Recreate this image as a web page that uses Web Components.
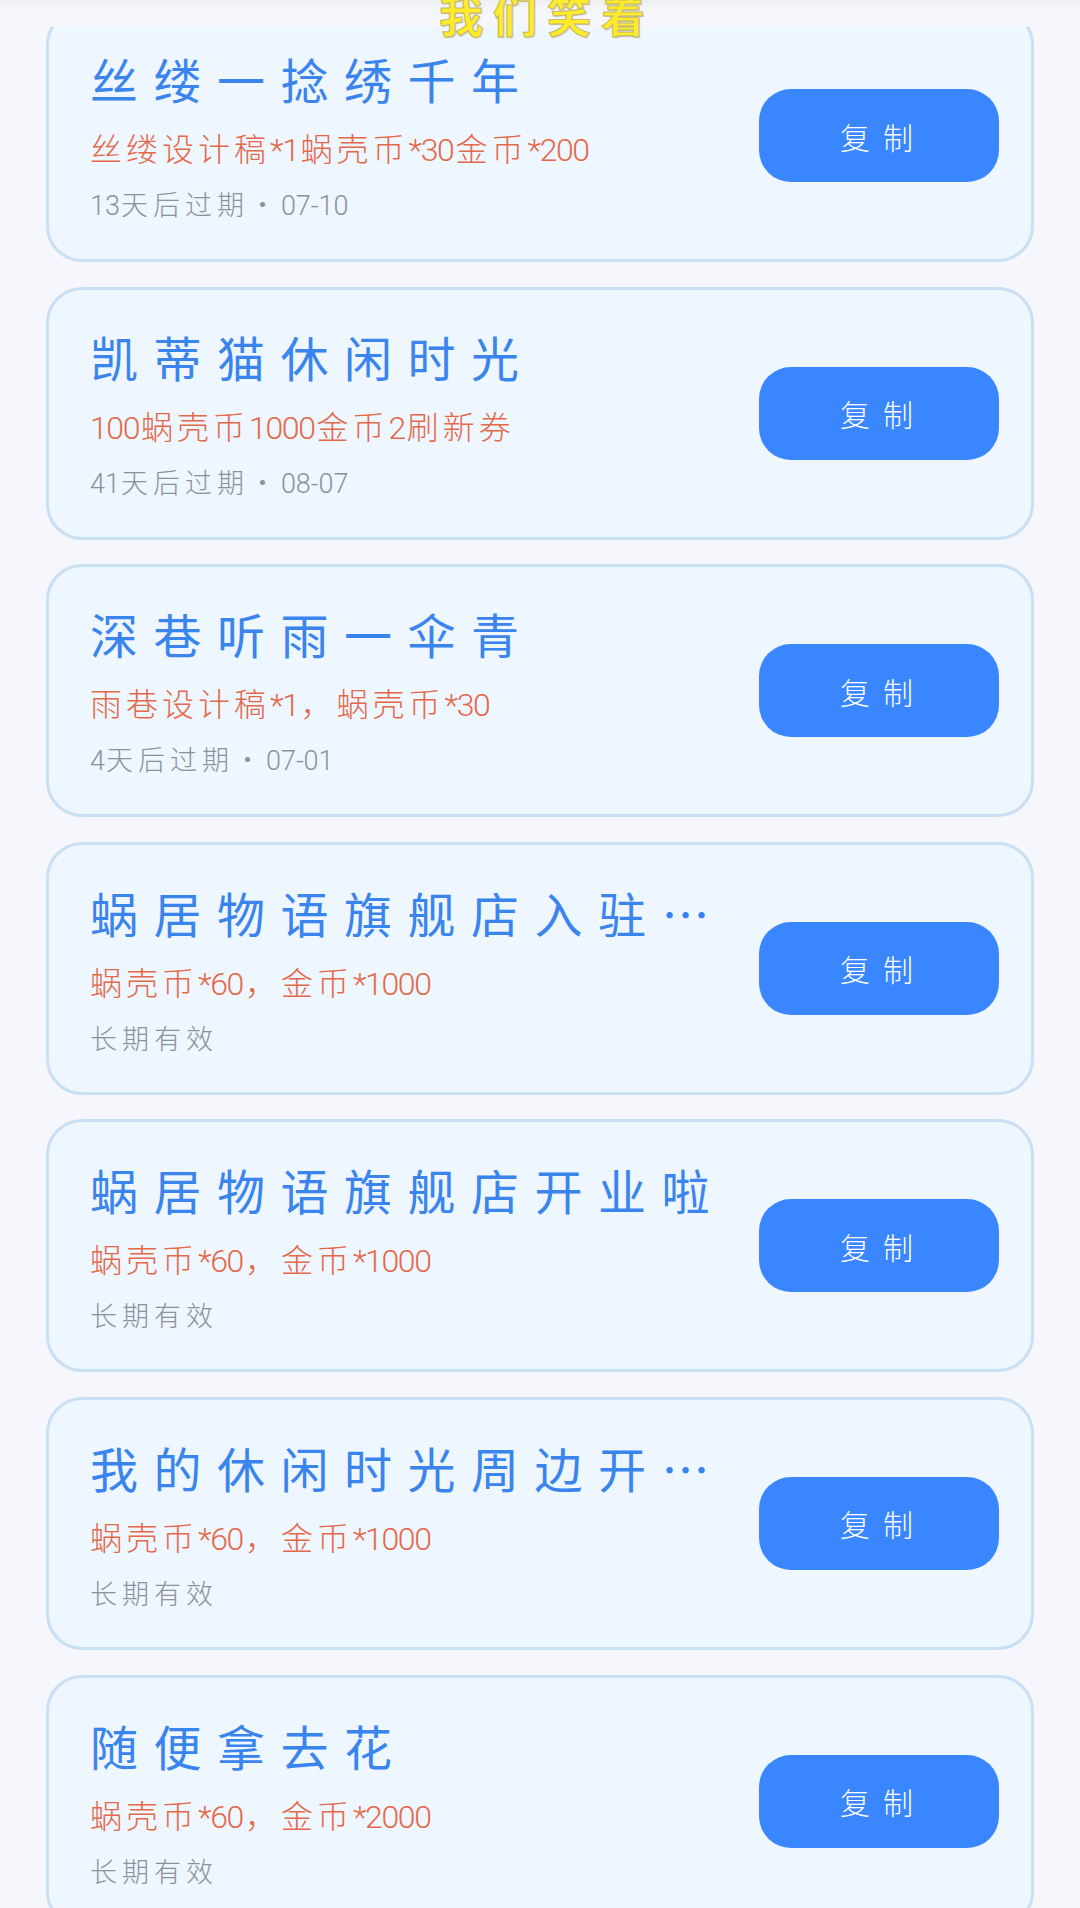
<!DOCTYPE html>
<html lang="zh-CN">
<head>
<meta charset="utf-8">
<title>复制</title>
<style>
html,body{margin:0;padding:0;background:#f5f7fc;}
</style>
</head>
<body>
<x-page heading="我们笑着">
  <x-coupon name="丝缕一捻绣千年" reward="丝缕设计稿*1蜗壳币*30金币*200" expiry="13天后过期 · 07-10"></x-coupon>
  <x-coupon name="凯蒂猫休闲时光" reward="100蜗壳币1000金币2刷新券" expiry="41天后过期 · 08-07"></x-coupon>
  <x-coupon name="深巷听雨一伞青" reward="雨巷设计稿*1，蜗壳币*30" expiry="4天后过期 · 07-01"></x-coupon>
  <x-coupon name="蜗居物语旗舰店入驻…" reward="蜗壳币*60，金币*1000" expiry="长期有效"></x-coupon>
  <x-coupon name="蜗居物语旗舰店开业啦" reward="蜗壳币*60，金币*1000" expiry="长期有效"></x-coupon>
  <x-coupon name="我的休闲时光周边开…" reward="蜗壳币*60，金币*1000" expiry="长期有效"></x-coupon>
  <x-coupon name="随便拿去花" reward="蜗壳币*60，金币*2000" expiry="长期有效"></x-coupon>
</x-page>
<script>
const FONT = '"Noto Sans CJK SC","Noto Sans",sans-serif';
const esc = s => s.replace(/&/g,'&amp;').replace(/</g,'&lt;');
// Latin runs are much narrower in the reference's hand-drawn face than CJK runs.
const runs = s => esc(s).replace(/[0-9*\-]+/g, m => `<span class="n">${m}</span>`);

class XPage extends HTMLElement{
  constructor(){
    super();
    const r=this.attachShadow({mode:'open'});
    r.innerHTML=`<style>
      :host{display:flex;flex-direction:column;width:1080px;height:1908px;overflow:hidden;position:relative;background:#f5f7fc;font-family:${FONT};}
      .bar{flex:none;height:27px;background:linear-gradient(#eeeff3 0,#f4f5f9 8px,#f5f7fc 14px);}
      .head{position:absolute;left:0;right:0;top:-11px;z-index:2;box-sizing:border-box;padding-left:14px;text-align:center;font-size:44px;line-height:50px;font-weight:700;letter-spacing:10px;color:#ffeb2a;-webkit-text-stroke:1px #c4bb70;text-shadow:1px 1px 1px rgba(120,110,60,.4);}
      .scroll{flex:1;min-height:0;overflow:hidden;}
      .list{display:flex;flex-direction:column;gap:24.6px;margin:-18px 46px 0 46px;}
    </style>
    <div class="bar"></div>
    <div class="head"></div>
    <div class="scroll"><div class="list"><slot></slot></div></div>`;
    r.querySelector('.head').textContent=this.getAttribute('heading');
  }
}
class XCopyButton extends HTMLElement{
  constructor(){
    super();
    this.attachShadow({mode:'open'}).innerHTML=`<style>
      :host{display:flex;align-items:center;justify-content:center;box-sizing:border-box;padding-left:8px;flex:none;width:240px;height:93px;border-radius:32px;background:#3a86fe;color:#fff;font-size:30px;font-weight:300;letter-spacing:13px;font-family:${FONT};}
    </style><slot></slot>`;
  }
}
class XCoupon extends HTMLElement{
  constructor(){
    super();
    const r=this.attachShadow({mode:'open'});
    r.innerHTML=`<style>
      :host{display:flex;align-items:center;box-sizing:border-box;height:253px;flex:none;padding:0 32px 0 41px;background:#eef6ff;border:3px solid #c9dff3;border-radius:36px;font-family:${FONT};font-weight:300;}
      .info{flex:1;min-width:0;display:flex;flex-direction:column;}
      .name{font-size:48px;line-height:71px;letter-spacing:15.5px;color:#3a84ee;font-weight:400;white-space:nowrap;overflow:hidden;}
      .reward{margin-top:9px;font-size:32px;line-height:48px;letter-spacing:4px;color:#e4694a;white-space:nowrap;}
      .expiry{margin-top:8px;font-size:27px;line-height:44px;letter-spacing:5px;word-spacing:-11px;color:#8b929c;white-space:nowrap;}
      .n{font-family:Roboto,"Liberation Sans",sans-serif;font-weight:300;letter-spacing:-1.4px;margin-right:2px;}
      .expiry .n{letter-spacing:0;margin-right:1px;}
    </style>
    <div class="info">
      <div class="name"></div>
      <div class="reward"></div>
      <div class="expiry"></div>
    </div>
    <x-copy-button>复制</x-copy-button>`;
    r.querySelector('.name').textContent=this.getAttribute('name');
    r.querySelector('.reward').innerHTML=runs(this.getAttribute('reward'));
    r.querySelector('.expiry').innerHTML=runs(this.getAttribute('expiry'));
  }
}
customElements.define('x-copy-button',XCopyButton);
customElements.define('x-coupon',XCoupon);
customElements.define('x-page',XPage);
</script>
</body>
</html>
